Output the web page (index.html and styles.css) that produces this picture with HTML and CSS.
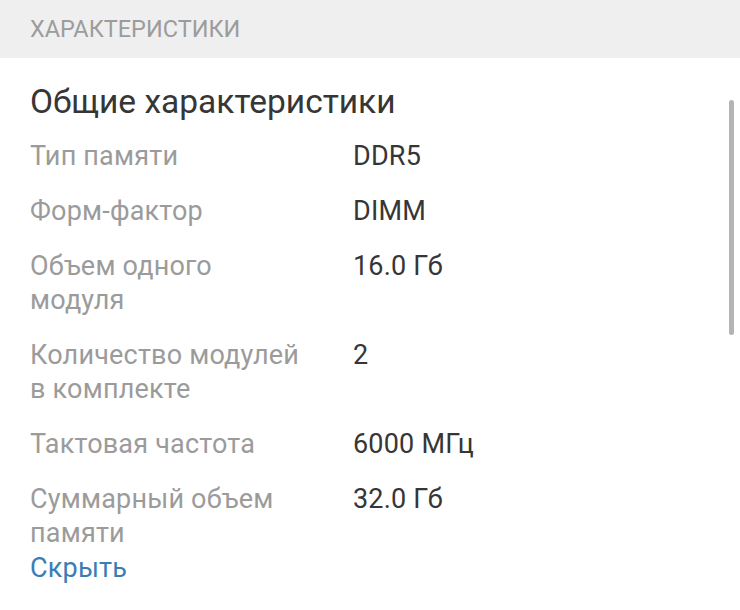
FILE: index.html
```html
<!DOCTYPE html>
<html lang="ru">
<head>
<meta charset="utf-8">
<link rel="stylesheet" href="styles.css">
</head>
<body>
<div class="header">ХАРАКТЕРИСТИКИ</div>
<div class="content">
  <h2 class="title">Общие характеристики</h2>
  <div class="specs">
    <div class="label">Тип памяти</div><div class="value">DDR5</div>
    <div class="label">Форм-фактор</div><div class="value">DIMM</div>
    <div class="label">Объем одного модуля</div><div class="value">16.0 Гб</div>
    <div class="label">Количество модулей в комплекте</div><div class="value">2</div>
    <div class="label">Тактовая частота</div><div class="value">6000 МГц</div>
    <div class="label">Суммарный объем памяти</div><div class="value">32.0 Гб</div>
  </div>
  <a class="toggle" href="#">Скрыть</a>
  <div class="scrollbar"></div>
</div>
</body>
</html>
```
FILE: styles.css
```css
html, body {
  margin: 0;
  padding: 0;
  background: #ffffff;
  font-family: Roboto, "Noto Sans", sans-serif;
}
.header {
  height: 58px;
  background: #efefef;
  display: flex;
  align-items: center;
  padding-left: 30px;
  font-size: 23.5px;
  color: #9c9c9c;
}
.content {
  position: relative;
  padding: 24px 30px 0;
}
.title {
  margin: 0;
  font-size: 33.5px;
  font-weight: 400;
  line-height: 40px;
  color: #363636;
}
.specs {
  margin-top: 17px;
  display: grid;
  grid-template-columns: 276px 1fr;
  column-gap: 47px;
  row-gap: 21px;
  font-size: 27px;
  letter-spacing: 0.2px;
  line-height: 34px;
}
.label {
  color: #9b9b9b;
}
.value {
  color: #363636;
}
.toggle {
  display: block;
  margin-top: 1px;
  font-size: 27px;
  letter-spacing: 0.2px;
  line-height: 34px;
  color: #3a7db5;
  text-decoration: none;
}
.scrollbar {
  position: absolute;
  top: 42px;
  right: 6px;
  width: 5px;
  height: 235px;
  border-radius: 3px;
  background: #b4b4b4;
}
```
